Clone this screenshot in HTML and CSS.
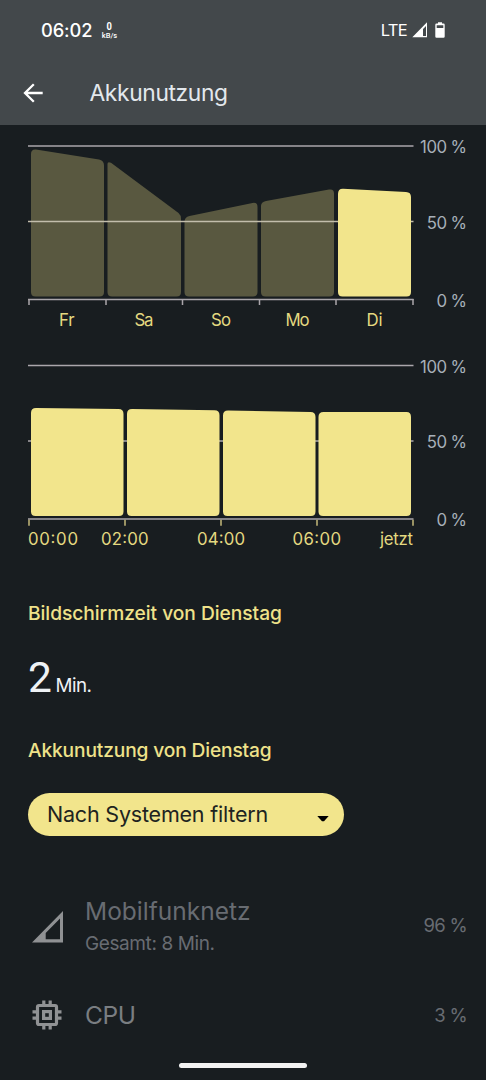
FILE: index.html
```html
<!DOCTYPE html>
<html lang="de">
<head>
<meta charset="utf-8">
<title>Akkunutzung</title>
<link rel="stylesheet" href="styles.css">
</head>
<body>
<div class="screen">
  <header class="top">
    <div class="status">
      <span class="clock">06:02</span>
      <span class="speed"><b>0</b><small>kB/s</small></span>
      <span class="network">LTE</span>
      <svg class="signal" width="16" height="16" viewBox="0 0 16 16"><path fill="#fff" fill-rule="evenodd" d="M15 .3V15.300H.3zM14 4V14H11V7z"/></svg>
      <svg class="battery" width="10" height="16" viewBox="0 0 10 16"><path fill="#fff" fill-rule="evenodd" d="M3 .3h4V1.500h1.500q1.200 0 1.200 1.200V14.500q0 1.200-1.200 1.200h-7q-1.200 0-1.200-1.200V2.700Q.3 1.500 1.500 1.500H3zM1.700 3.200V6h6.600V3.200z"/></svg>
    </div>
    <div class="bar">
      <svg class="back" width="22" height="22" viewBox="0 0 22 22"><path d="M20.700 11H3M11.800 2.300 3 11l8.800 8.700" fill="none" stroke="#fff" stroke-width="2.300"/></svg>
      <h1>Akkunutzung</h1>
    </div>
  </header>
  <main>
    <svg class="chart days" width="486" height="215" viewBox="0 125 486 215">
      <path class="grid" d="M28 146H413.500"/>
      <g class="dim">
        <path d="M31 154q0-5 5-4.500L99 159.500q5 .8 5 6V292q0 4.500-4.500 4.500h-64Q31 296.500 31 292z"/>
        <path d="M107.500 164q0-3 3.500-1.200L178.500 213q2.500 2 2.500 6V292q0 4.500-4.500 4.500H112q-4.500 0-4.500-4.500z"/>
        <path d="M184.500 222q0-5 5-6L252.500 203q5-1 5 4V292q0 4.500-4.500 4.500h-64q-4.500 0-4.500-4.500z"/>
        <path d="M261 206q0-4 5-5L329 189.600q5-1 5 4V292q0 4.500-4.500 4.500h-64q-4.500 0-4.500-4.500z"/>
      </g>
      <path class="grid mid" d="M28 221.500H338M411 221.500H413.500"/>
      <path class="bright" d="M338 194q0-5.300 5-5.200l63 3.200q5 .2 5 5V292q0 4.500-4.500 4.500h-64Q338 296.500 338 292z"/>
      <path class="grid" d="M28 299.500H413.500"/>
      <path class="tick" d="M29 299v6M106 299v6M182.500 299v6M259.500 299v6M336 299v6M413 299v6"/>
      <g class="pct">
        <text x="466.500" y="153">100 %</text>
        <text x="466.500" y="228.500">50 %</text>
        <text x="466.500" y="306.500">0 %</text>
      </g>
      <g class="axis">
        <text x="59" y="325.500" textLength="15.500">Fr</text>
        <text x="134.500" y="325.500" textLength="19">Sa</text>
        <text x="211" y="325.500" textLength="20">So</text>
        <text x="285.500" y="325.500" textLength="24">Mo</text>
        <text x="366.500" y="325.500">Di</text>
      </g>
    </svg>
    <svg class="chart hours" width="486" height="220" viewBox="0 340 486 220">
      <path class="grid" d="M28 365.500H413.500M28 441H413.500"/>
      <g class="bright">
        <path d="M31 413q0-5 5-5l82.500 1q5 0 5 5v97.500q0 4.500-4.500 4.500h-83.500Q31 516 31 511.500z"/>
        <path d="M127 414q0-5 5-5l82.500 1.300q5 0 5 5v96.200q0 4.500-4.500 4.500h-83.500Q127 516 127 511.500z"/>
        <path d="M223 415.500q0-5 5-5l82.500 1.400q5 0 5 5v94.600q0 4.500-4.500 4.500h-83.500Q223 516 223 511.500z"/>
        <path d="M318.500 417q0-5 5-5h83q4.500 0 4.500 5v94.500q0 4.500-4.500 4.500H323q-4.500 0-4.500-4.500z"/>
      </g>
      <path class="grid" d="M28 519H413.500"/>
      <path class="tick gold" d="M29 519.700v6M125 519.700v6M221 519.700v6M317 519.700v6M413 519.700v6"/>
      <g class="pct">
        <text x="466.500" y="373">100 %</text>
        <text x="466.500" y="448">50 %</text>
        <text x="466.500" y="526">0 %</text>
      </g>
      <g class="axis">
        <text x="28" y="545" textLength="50">00:00</text>
        <text x="101" y="545" textLength="47.500">02:00</text>
        <text x="197" y="545" textLength="48">04:00</text>
        <text x="292.500" y="545" textLength="48.500">06:00</text>
        <text x="380" y="545" textLength="33">jetzt</text>
      </g>
    </svg>
    <section class="summary">
      <h2 class="h-screen">Bildschirmzeit von Dienstag</h2>
      <p class="time"><span class="num">2</span><span class="unit">Min.</span></p>
      <h2 class="h-usage">Akkunutzung von Dienstag</h2>
      <button class="filter"><span>Nach Systemen filtern</span><svg width="12" height="6" viewBox="0 0 12 6"><path d="M.3 0h11.400L7 5.200H5z"/></svg></button>
    </section>
    <section class="list">
      <div class="row">
        <svg class="cell" width="34" height="34" viewBox="0 0 34 34"><path fill="#8f9193" fill-rule="evenodd" d="M33 2V33.500H2zM30 9.500 15.700 24v6.200H30z"/></svg>
        <div class="label"><span class="name mobile">Mobilfunknetz</span><span class="detail">Gesamt: 8 Min.</span></div>
        <span class="value v1">96 %</span>
      </div>
      <div class="row cpu-row">
        <svg width="34" height="34" viewBox="0 0 34 34"><g fill="none" stroke="#909294" stroke-width="3.200"><rect x="7.500" y="7.500" width="19" height="19" rx="1.500"/><rect x="13.600" y="13.600" width="6.800" height="6.800"/><path d="M13.800 2.500V7M20.200 2.500V7M13.800 27v4.500M20.200 27v4.500M2.500 13.800H7M2.500 20.200H7M27 13.800h4.500M27 20.200h4.500"/></g></svg>
        <div class="label"><span class="name cpu">CPU</span></div>
        <span class="value">3 %</span>
      </div>
    </section>
  </main>
  <div class="handle"></div>
</div>
</body>
</html>
```
FILE: styles.css
```css
* { box-sizing: border-box; margin: 0; padding: 0; }
body { background: #181d20; font-family: Inter, Roboto, sans-serif; }
.screen { width: 486px; height: 1080px; overflow: hidden; display: flex; flex-direction: column; background: #181d20; white-space: nowrap; }
.top { height: 125px; flex: none; background: #43484b; }
.status { height: 60px; padding: 0 41px; display: flex; align-items: center; color: #fff; }
.clock { font-size: 18.300px; font-weight: 500; width: 60px; letter-spacing: -.1px; }
.speed { width: 17px; display: flex; flex-direction: column; align-items: center; }
.speed b { font: 700 11px/11px Roboto, sans-serif; transform: scaleX(.85); }
.speed small { font: 500 7.500px/8px Roboto, sans-serif; }
.network { margin-left: auto; font-size: 16.500px; letter-spacing: -.7px; }
.signal { margin-left: 5px; }
.battery { margin: 0 0 0 7px; }
.bar { height: 65px; padding-left: 22px; display: flex; align-items: center; }
h1 { margin-left: 45.500px; color: #e3e8ed; font-size: 22.800px; font-weight: 400; letter-spacing: -.36px; line-height: 28px; }
.chart { display: block; }
.grid { stroke: #aaa6ab; stroke-width: 1.600; }
.mid { stroke: #c2bdab; }
.tick { stroke: #aaa6ab; stroke-width: 1.500; }
.gold { stroke: #c3b979; }
.dim { fill: #595840; }
.bright { fill: #f2e58c; }
.pct text { fill: #a7b0b9; font-size: 16.800px; letter-spacing: -.5px; word-spacing: -.3px; text-anchor: end; }
.axis text { fill: #e4d980; font-size: 16.800px; }
.summary { padding-left: 28px; height: 302px; display: flex; flex-direction: column; align-items: flex-start; }
h2 { color: #efe28a; font-size: 19.200px; line-height: 26px; font-weight: 500; }
.h-screen { margin-top: 40px; letter-spacing: -.04px; }
.time { height: 60px; margin-top: 27px; display: flex; align-items: baseline; gap: 6px; color: #eef2f5; line-height: 50px; }
.num { font: 400 42.500px/50px Roboto, Inter, sans-serif; width: 22px; }
.unit { font-size: 18.800px; letter-spacing: -.5px; margin-left: -.5px; }
.h-usage { margin-top: 24px; letter-spacing: -.15px; }
.filter { margin-top: 30px; flex: none; width: 316px; height: 43px; border: 0; border-radius: 22px; padding: 0 15px 2px 19px; display: flex; align-items: center; justify-content: space-between; background: #f2e58c; color: #20231f; font: 400 21.500px Inter, Roboto, sans-serif; letter-spacing: -.2px; }
.filter svg { margin-top: 10px; }
.list { display: flex; flex-direction: column; padding: 33px 19px 0 30px; color: #686c72; }
.row { display: flex; height: 64px; align-items: center; }
.cell { margin-top: -3px; }
.label { margin-left: 21px; flex: 1; display: flex; flex-direction: column; }
.name { font-size: 24.500px; line-height: 34px; }
.mobile { margin-top: -1px; }
.detail { font-size: 19px; line-height: 31px; letter-spacing: -.4px; }
.value { font-size: 18.500px; letter-spacing: -.7px; }
.v1 { margin-top: -4px; }
.cpu-row { margin-top: 24px; }
.cpu { color: #7a7e82; letter-spacing: -.4px; }
.handle { position: absolute; left: 179px; top: 1063px; width: 128px; height: 5px; border-radius: 3px; background: #f2f2f2; }
```
